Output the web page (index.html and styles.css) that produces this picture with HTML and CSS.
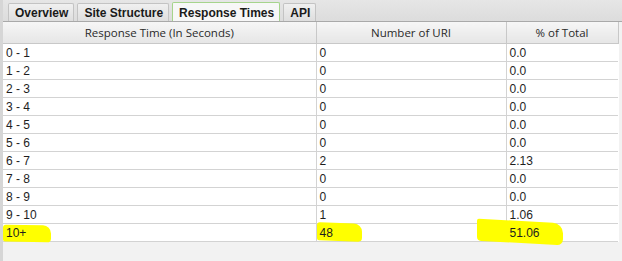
FILE: index.html
```html
<!DOCTYPE html>
<html lang="en">
<head>
  <meta charset="UTF-8">
  <title>Response Times</title>
  <link rel="stylesheet" href="styles.css">
</head>
<body>
  <div class="panel">
    <div class="tabs">
      <div class="tab">Overview</div>
      <div class="tab">Site Structure</div>
      <div class="tab active">Response Times</div>
      <div class="tab">API</div>
    </div>
    <table class="grid">
      <colgroup>
        <col class="c1">
        <col class="c2">
        <col class="c3">
      </colgroup>
      <thead>
        <tr>
          <th>Response Time (In Seconds)</th>
          <th>Number of URI</th>
          <th>% of Total</th>
        </tr>
      </thead>
      <tbody>
        <tr><td>0 - 1</td><td>0</td><td>0.0</td></tr>
        <tr><td>1 - 2</td><td>0</td><td>0.0</td></tr>
        <tr><td>2 - 3</td><td>0</td><td>0.0</td></tr>
        <tr><td>3 - 4</td><td>0</td><td>0.0</td></tr>
        <tr><td>4 - 5</td><td>0</td><td>0.0</td></tr>
        <tr><td>5 - 6</td><td>0</td><td>0.0</td></tr>
        <tr><td>6 - 7</td><td>2</td><td>2.13</td></tr>
        <tr><td>7 - 8</td><td>0</td><td>0.0</td></tr>
        <tr><td>8 - 9</td><td>0</td><td>0.0</td></tr>
        <tr><td>9 - 10</td><td>1</td><td>1.06</td></tr>
        <tr class="marked">
          <td><span class="mark m1"></span><span class="val">10+</span></td>
          <td><span class="mark m2"></span><span class="val">48</span></td>
          <td><span class="mark m3"></span><span class="val">51.06</span></td>
        </tr>
      </tbody>
    </table>
  </div>
</body>
</html>
```

FILE: styles.css
```css
* {
  margin: 0;
  padding: 0;
  box-sizing: border-box;
}

body {
  background: #f0f0f0;
  font-family: 'Liberation Sans', Arial, sans-serif;
  width: 622px;
  height: 261px;
  overflow: hidden;
}

.panel {
  border-left: 3px solid #d6d6d6;
  height: 261px;
  background: #f2f2f2;
}

.tabs {
  display: flex;
  align-items: flex-end;
  gap: 3px;
  height: 22px;
  padding-left: 5px;
  background: linear-gradient(#e6e6e6, #dcdcdc);
  border-bottom: 1px solid #a9a9a9;
}

.tab {
  height: 18px;
  padding: 1px 5px 0 6px;
  font-size: 12px;
  font-weight: bold;
  line-height: 17px;
  color: #1a1a1a;
  background: linear-gradient(#f0f0f0, #dedede);
  border: 1px solid #c3c3c3;
  border-bottom: none;
  border-radius: 2px 2px 0 0;
}

.tab.active {
  height: 19px;
  line-height: 18px;
  background: #f7f7f7;
  border-color: #a6d48c;
}

.grid {
  width: 615px;
  border-collapse: collapse;
  table-layout: fixed;
  font-size: 12px;
  color: #1e1e1e;
  background: #fff;
}

.c1 { width: 313px; }
.c2 { width: 190px; }
.c3 { width: 112px; }

.grid th {
  height: 21px;
  padding-top: 1px;
  font-weight: normal;
  font-family: 'Open Sans', sans-serif;
  font-size: 11.5px;
  color: #2a2a2a;
  background: linear-gradient(#f6f6f6, #e6e6e6);
  border-left: 1px solid #c8c8c8;
  border-right: 1px solid #c8c8c8;
  border-bottom: 1px solid #c8c8c8;
}

.grid th:first-child {
  border-left: none;
}

.grid td {
  height: 18px;
  padding: 1px 3px 0 3px;
  line-height: 16px;
  border-bottom: 1px solid #d3d3d3;
  border-right: 1px solid #d3d3d3;
  white-space: nowrap;
}

.grid td:last-child {
  border-right: none;
}

.marked td {
  position: relative;
}

.val {
  position: relative;
}

/* highlighter strokes over the last row */
.mark {
  position: absolute;
  background: #ffff00;
  border-radius: 3px 8px 4px 2px;
}

.m1 {
  left: 0;
  top: 1px;
  width: 48px;
  height: 17px;
  transform: skewY(1deg);
}

.m2 {
  left: 0;
  top: -1px;
  width: 45px;
  height: 18px;
  transform: skewY(2deg);
}

.m3 {
  left: -30px;
  top: -3px;
  width: 86px;
  height: 22px;
  border-radius: 2px 10px 6px 4px;
  transform: skewY(3deg);
}
```
